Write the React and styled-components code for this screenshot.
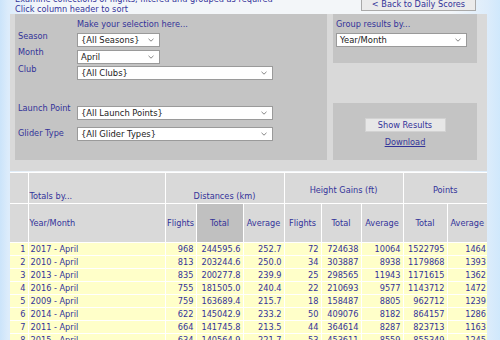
import React from "react";
import styled, { createGlobalStyle } from "styled-components";

const GlobalStyle = createGlobalStyle`
  html, body {
    margin: 0;
    padding: 0;
  }
  body {
    height: 340px;
    overflow: hidden;
    font-family: "DejaVu Sans", Verdana, sans-serif;
    font-size: 8.2px;
    color: #333399;
    background: linear-gradient(
      to right,
      #cbe4fa 0px,
      #dcecfb 8px,
      #f3f6f9 40px,
      #f3f6f9 450px,
      #dcecfb 488px,
      #d0e8fc 500px
    );
  }
`;

const Page = styled.div`
  width: 477px;
  margin: -7px 0 0 10px;
`;

const Intro = styled.div`
  display: flex;
  justify-content: space-between;
  align-items: flex-start;
  height: 21px;
`;

const IntroText = styled.div`
  padding: 1px 0 0 5px;
  line-height: 10px;
  white-space: nowrap;
`;

const BackButton = styled.button`
  margin: 4px 11px 0 0;
  width: 115px;
  height: 14px;
  padding: 0;
  font-family: inherit;
  font-size: 8.2px;
  color: #333399;
  background: #ebebeb;
  border: 1px solid #a9a9a9;
  line-height: 12px;
`;

const FilterArea = styled.div`
  display: flex;
  gap: 6px;
  background: #d9d9d9;
  padding: 0 10px 11px 5px;
`;

const Panel = styled.div`
  background: #c4c4c4;
  box-sizing: border-box;
`;

const SelectionPanel = styled(Panel)`
  width: 312px;
  height: 146px;
  padding: 5px 0 0 3px;
  display: flex;
  flex-direction: column;
`;

const SideColumn = styled.div`
  width: 144px;
  display: flex;
  flex-direction: column;
  justify-content: space-between;
`;

const GroupPanel = styled(Panel)`
  height: 49px;
  padding: 5px 0 0 3px;
`;

const ActionPanel = styled(Panel)`
  height: 57px;
  display: flex;
  flex-direction: column;
  align-items: center;
  padding-top: 15px;
`;

const Heading = styled.div`
  line-height: 10px;
  height: 14px;
  padding-left: ${(p) => p.$indent || 0}px;
  white-space: nowrap;
`;

const FieldRow = styled.div`
  display: flex;
  align-items: flex-start;
  height: 14px;
  margin-top: ${(p) => p.$gap || 0}px;
`;

const Label = styled.div`
  width: 59px;
  flex: none;
  line-height: 10px;
  margin-top: ${(p) => p.$offset || 0}px;
  white-space: nowrap;
`;

const SelectBox = styled.div`
  box-sizing: border-box;
  width: ${(p) => p.$width}px;
  height: 14px;
  background: #fff;
  border: 1px solid #9a9a9a;
  display: flex;
  align-items: center;
  justify-content: space-between;
  padding: 0 5px 0 3px;
  color: #1a1a1a;
  font-size: 8.4px;
  white-space: nowrap;
`;

const Chevron = () => (
  <svg width="6" height="4" viewBox="0 0 6 4" aria-hidden="true">
    <path d="M0.5 0.8 L3 3.2 L5.5 0.8" fill="none" stroke="#777" strokeWidth="0.9" />
  </svg>
);

const Select = ({ children, ...rest }) => (
  <SelectBox {...rest}>
    <span>{children}</span>
    <Chevron />
  </SelectBox>
);

const ShowButton = styled.button`
  width: 81px;
  height: 14px;
  padding: 0;
  font-family: inherit;
  font-size: 8.2px;
  color: #333399;
  background: #e7e7e7;
  border: 1px solid #d2d2d2;
  line-height: 12px;
`;

const DownloadLink = styled.a`
  margin-top: 5px;
  color: #333399;
  text-decoration: underline;
  line-height: 10px;
  cursor: pointer;
`;

const Table = styled.table`
  width: 477px;
  margin-top: 1px;
  border-collapse: collapse;
  table-layout: fixed;
  border-top: 1px solid #fff;
`;

const Th = styled.th`
  background: ${(p) => (p.$sorted ? "#c0c0c0" : "#d9d9d9")};
  border: 1px solid #fff;
  font-weight: normal;
  color: #333399;
  text-align: ${(p) => p.$align || "center"};
  vertical-align: ${(p) => p.$valign || "middle"};
  padding: ${(p) => p.$pt || 0}px 1px ${(p) => p.$pb || 0}px 1px;
  line-height: 10px;
  white-space: nowrap;
  overflow: hidden;
  &:first-child { border-left: none; }
  &:last-child { border-right: none; }
`;

const HeadRow = styled.tr`
  height: ${(p) => p.$h}px;
`;

const Td = styled.td`
  background: #ffffc9;
  border: 1px solid #fff;
  color: #333399;
  text-align: ${(p) => p.$align || "right"};
  padding: 0 2px;
  height: 12px;
  line-height: 12px;
  white-space: nowrap;
  overflow: hidden;
  &:first-child { border-left: none; padding-right: 2px; }
  &:last-child { border-right: none; padding-right: 1px; }
`;

const widths = [18, 137, 31, 47, 41, 37, 40, 42, 44, 40];

const rows = [
  ["1", "2017 - April", "968", "244595.6", "252.7", "72", "724638", "10064", "1522795", "1464"],
  ["2", "2010 - April", "813", "203244.6", "250.0", "34", "303887", "8938", "1179868", "1393"],
  ["3", "2013 - April", "835", "200277.8", "239.9", "25", "298565", "11943", "1171615", "1362"],
  ["4", "2016 - April", "755", "181505.0", "240.4", "22", "210693", "9577", "1143712", "1472"],
  ["5", "2009 - April", "759", "163689.4", "215.7", "18", "158487", "8805", "962712", "1239"],
  ["6", "2014 - April", "622", "145042.9", "233.2", "50", "409076", "8182", "864157", "1286"],
  ["7", "2011 - April", "664", "141745.8", "213.5", "44", "364614", "8287", "823713", "1163"],
  ["8", "2015 - April", "634", "140564.9", "221.7", "53", "453611", "8559", "855349", "1245"],
];

export default function App() {
  return (
    <>
      <GlobalStyle />
      <Page>
        <Intro>
          <IntroText>
            <div>Examine collections of flights, filtered and grouped as required</div>
            <div>Click column header to sort</div>
          </IntroText>
          <BackButton>&lt; Back to Daily Scores</BackButton>
        </Intro>

        <FilterArea>
          <SelectionPanel>
            <Heading $indent={59}>Make your selection here...</Heading>
            <FieldRow>
              <Label $offset={-2}>Season</Label>
              <Select $width={83}>{"{All Seasons}"}</Select>
            </FieldRow>
            <FieldRow $gap={3}>
              <Label $offset={-3}>Month</Label>
              <Select $width={83}>April</Select>
            </FieldRow>
            <FieldRow $gap={2}>
              <Label $offset={-2}>Club</Label>
              <Select $width={196}>{"{All Clubs}"}</Select>
            </FieldRow>
            <FieldRow $gap={26}>
              <Label $offset={-3}>Launch Point</Label>
              <Select $width={196}>{"{All Launch Points}"}</Select>
            </FieldRow>
            <FieldRow $gap={7}>
              <Label $offset={1}>Glider Type</Label>
              <Select $width={196}>{"{All Glider Types}"}</Select>
            </FieldRow>
          </SelectionPanel>

          <SideColumn>
            <GroupPanel>
              <Heading>Group results by...</Heading>
              <Select $width={131}>Year/Month</Select>
            </GroupPanel>
            <ActionPanel>
              <ShowButton>Show Results</ShowButton>
              <DownloadLink>Download</DownloadLink>
            </ActionPanel>
          </SideColumn>
        </FilterArea>

        <Table>
          <colgroup>
            {widths.map((w, i) => (
              <col key={i} style={{ width: w }} />
            ))}
          </colgroup>
          <thead>
            <HeadRow $h={31}>
              <Th />
              <Th $align="left" $valign="bottom" $pb={2}>Totals by...</Th>
              <Th colSpan={3} $valign="bottom" $pb={2}>Distances (km)</Th>
              <Th colSpan={3} $pt={4}>Height Gains (ft)</Th>
              <Th colSpan={2} $pt={4}>Points</Th>
            </HeadRow>
            <HeadRow $h={39}>
              <Th />
              <Th $align="left">Year/Month</Th>
              <Th>Flights</Th>
              <Th $sorted>Total</Th>
              <Th>Average</Th>
              <Th>Flights</Th>
              <Th>Total</Th>
              <Th>Average</Th>
              <Th>Total</Th>
              <Th>Average</Th>
            </HeadRow>
          </thead>
          <tbody>
            {rows.map((r) => (
              <tr key={r[0]}>
                {r.map((c, i) => (
                  <Td key={i} $align={i === 1 ? "left" : "right"}>
                    {c}
                  </Td>
                ))}
              </tr>
            ))}
          </tbody>
        </Table>
      </Page>
    </>
  );
}
